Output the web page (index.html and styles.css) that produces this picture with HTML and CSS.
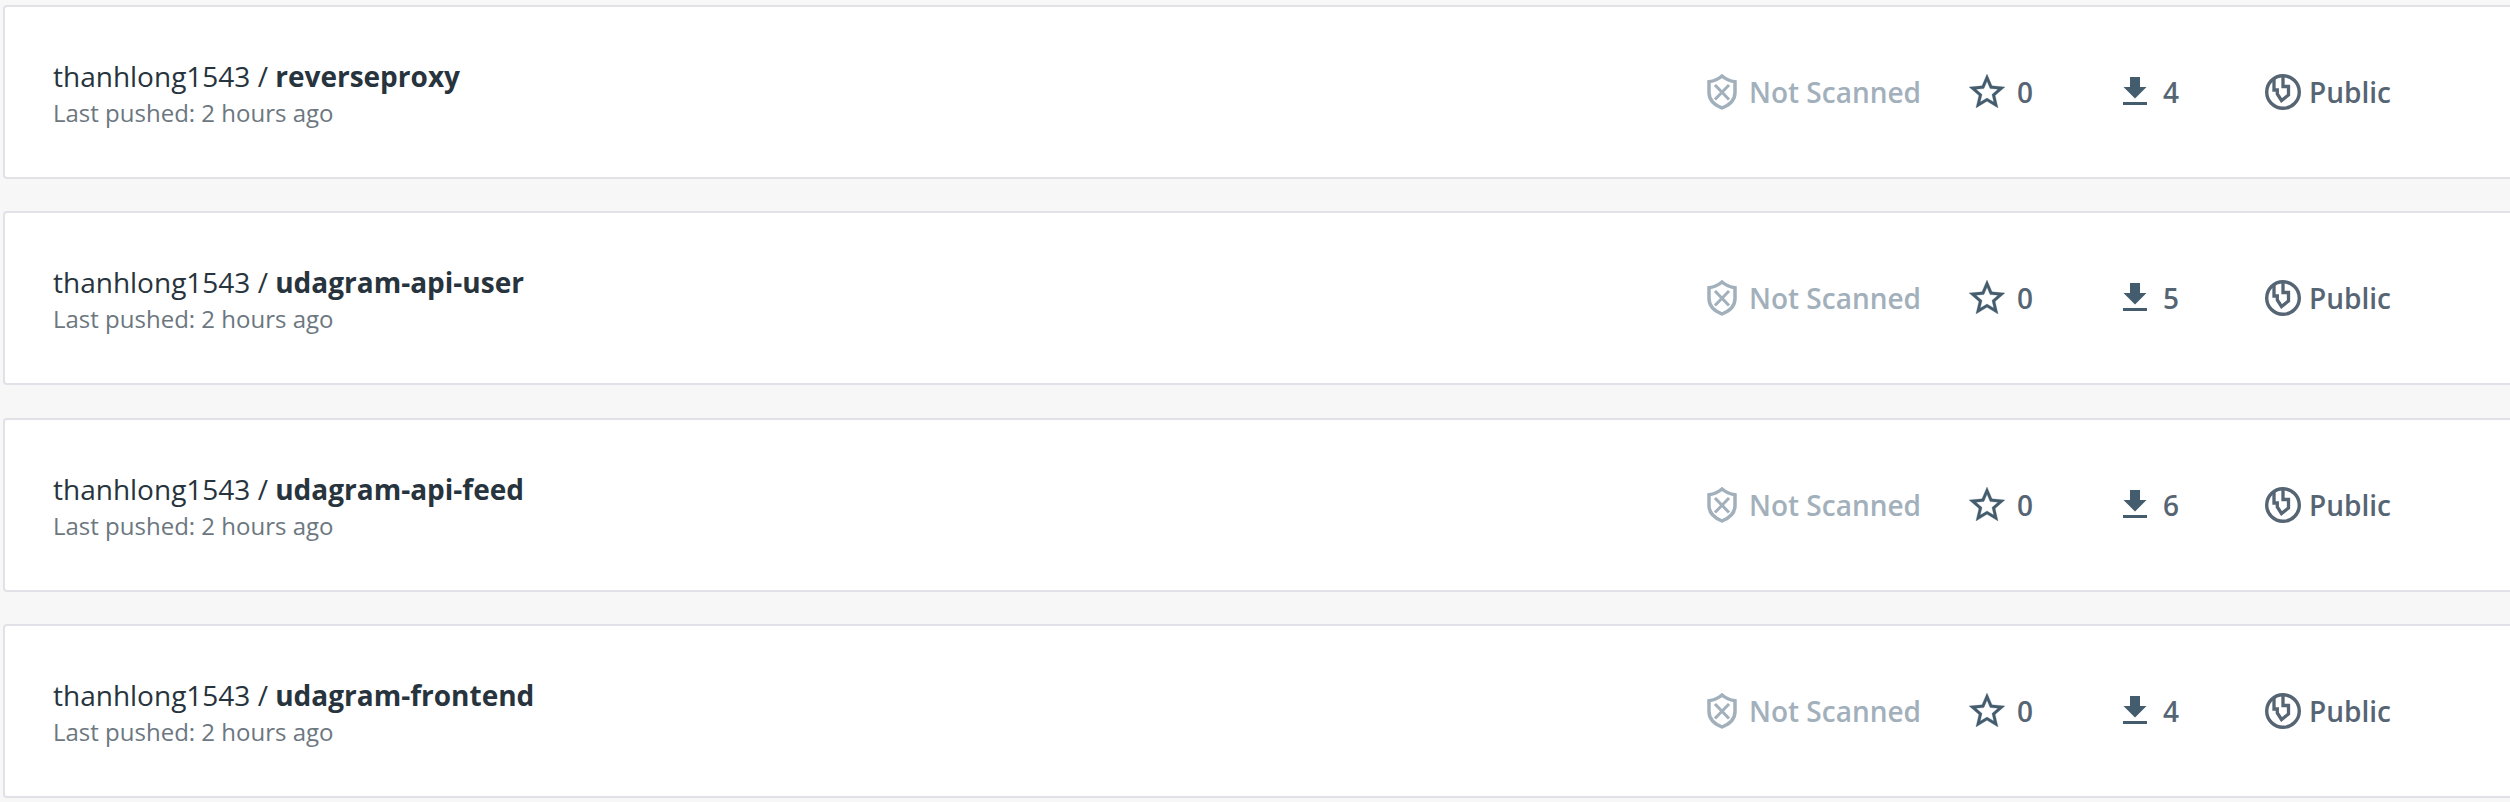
FILE: index.html
```html
<!DOCTYPE html>
<html lang="en">
<head>
<meta charset="utf-8">
<title>Repositories</title>
<link rel="stylesheet" href="styles.css">
</head>
<body>
<svg class="defs" width="0" height="0" aria-hidden="true">
  <symbol id="shield" viewBox="0 0 30 36"><path d="M15 2C11.500 5 7 7 2 7.800V18.500C2 25.500 7.500 31 15 34C22.500 31 28 25.500 28 18.500V7.800C23 7 18.500 5 15 2Z" fill="none" stroke="currentColor" stroke-width="3.500"/><path d="M9 12L21 24.500M21 12L9 24.500" fill="none" stroke="currentColor" stroke-width="3" stroke-linecap="square"/></symbol>
  <symbol id="star" viewBox="2 2 20 19"><path fill="currentColor" stroke="currentColor" stroke-width=".15" d="M22 9.240l-7.190-.620L12 2 9.190 8.630 2 9.240l5.460 4.730L5.820 21 12 17.270 18.180 21l-1.630-7.030L22 9.240zM12 15.400l-3.760 2.270 1-4.280-3.320-2.880 4.380-.380L12 6.100l1.710 4.040 4.380.380-3.320 2.880 1 4.280L12 15.400z"/></symbol>
  <symbol id="download" viewBox="0 0 24 28"><path fill="currentColor" d="M7 0H17V10H23.500L12 21.500L0.500 10H7ZM0 25H24V28H0Z"/></symbol>
  <symbol id="globe" viewBox="0 0 36 36"><circle cx="18" cy="18" r="16.300" fill="none" stroke="currentColor" stroke-width="3.400"/><path d="M9 5V16H12.300V20L16.500 26.500L23.500 21V12.500H18V2" fill="none" stroke="currentColor" stroke-width="3.300"/></symbol>
</svg>
<main class="repos">
  <article class="card">
    <div class="info"><div class="name">thanhlong1543 / <strong>reverseproxy</strong></div><div class="pushed">Last pushed: 2 hours ago</div></div>
    <div class="scan"><svg class="i-shield"><use href="#shield"/></svg><span>Not Scanned</span></div>
    <div class="stars"><svg class="i-star"><use href="#star"/></svg><span>0</span></div>
    <div class="pulls"><svg class="i-download"><use href="#download"/></svg><span>4</span></div>
    <div class="access"><svg class="i-globe"><use href="#globe"/></svg><span>Public</span></div>
  </article>
  <article class="card">
    <div class="info"><div class="name">thanhlong1543 / <strong>udagram-api-user</strong></div><div class="pushed">Last pushed: 2 hours ago</div></div>
    <div class="scan"><svg class="i-shield"><use href="#shield"/></svg><span>Not Scanned</span></div>
    <div class="stars"><svg class="i-star"><use href="#star"/></svg><span>0</span></div>
    <div class="pulls"><svg class="i-download"><use href="#download"/></svg><span>5</span></div>
    <div class="access"><svg class="i-globe"><use href="#globe"/></svg><span>Public</span></div>
  </article>
  <article class="card">
    <div class="info"><div class="name">thanhlong1543 / <strong>udagram-api-feed</strong></div><div class="pushed">Last pushed: 2 hours ago</div></div>
    <div class="scan"><svg class="i-shield"><use href="#shield"/></svg><span>Not Scanned</span></div>
    <div class="stars"><svg class="i-star"><use href="#star"/></svg><span>0</span></div>
    <div class="pulls"><svg class="i-download"><use href="#download"/></svg><span>6</span></div>
    <div class="access"><svg class="i-globe"><use href="#globe"/></svg><span>Public</span></div>
  </article>
  <article class="card">
    <div class="info"><div class="name">thanhlong1543 / <strong>udagram-frontend</strong></div><div class="pushed">Last pushed: 2 hours ago</div></div>
    <div class="scan"><svg class="i-shield"><use href="#shield"/></svg><span>Not Scanned</span></div>
    <div class="stars"><svg class="i-star"><use href="#star"/></svg><span>0</span></div>
    <div class="pulls"><svg class="i-download"><use href="#download"/></svg><span>4</span></div>
    <div class="access"><svg class="i-globe"><use href="#globe"/></svg><span>Public</span></div>
  </article>
</main>
</body>
</html>
```
FILE: styles.css
```css
* { box-sizing: border-box; }
body {
  margin: 0;
  height: 802px;
  overflow: hidden;
  background: #f7f7f7;
  font-family: "Open Sans", "Noto Sans", sans-serif;
  font-size: 28px;
  color: #27343d;
}
.defs { display: block; height: 0; }
svg { display: block; flex: none; }
.repos {
  display: flex;
  flex-direction: column;
  gap: 32px;
  padding: 5px 0 0 3px;
  width: 2530px;
}
.card {
  display: grid;
  grid-template-columns: 1654px 262px 154px 142px 1fr;
  align-items: center;
  height: 174px;
  padding: 0 48px;
  background: #fff;
  border: 2px solid #e1e1e7;
  border-radius: 4px;
}
.card:nth-child(3) { margin-top: 1px; }
.info { padding-top: 4px; }
.name { line-height: 38px; }
.name strong { font-weight: 700; }
.pushed { font-size: 24px; line-height: 36px; color: #6c777f; }
.scan, .stars, .pulls, .access {
  display: flex;
  align-items: center;
  height: 40px;
  line-height: 40px;
  font-weight: 600;
  color: #566573;
}
.scan { color: #a2b0bb; gap: 12px; }
.stars { gap: 12px; }
.pulls { gap: 16px; }
.access { gap: 8px; }
.stars svg, .pulls svg { color: #445d6e; margin-bottom: 2px; }
.i-shield { width: 30px; height: 36px; }
.i-star { width: 36px; height: 34px; }
.i-download { width: 24px; height: 28px; }
.i-globe { width: 36px; height: 36px; }
```
